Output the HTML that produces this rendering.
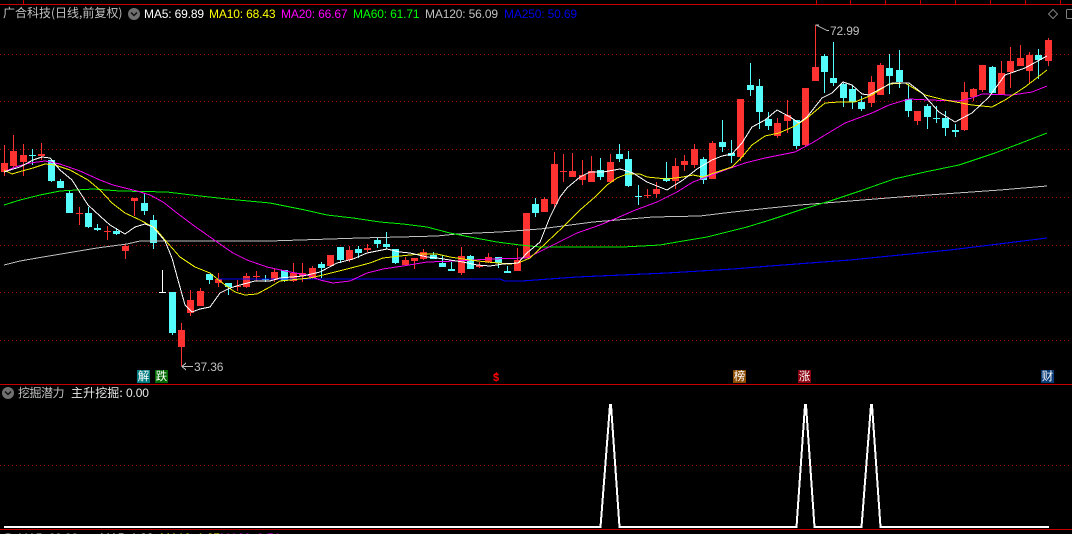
<!DOCTYPE html>
<html><head><meta charset="utf-8">
<style>
html,body{margin:0;padding:0;background:#000}
#p{position:relative;width:1072px;height:534px;overflow:hidden;background:#000;font-family:"Liberation Sans","Noto Sans CJK SC",sans-serif}
svg{position:absolute;left:0;top:0}
.t{position:absolute;white-space:nowrap;font-size:12px;line-height:14px;top:7px;letter-spacing:-.15px}
.c{font-family:"Noto Sans CJK SC","WenQuanYi Zen Hei",sans-serif;font-size:12px;color:#c0c0c0}
.m{position:absolute;top:370px;width:13px;height:13px;color:#fff;font:11.5px/13px "Noto Sans CJK SC",sans-serif;text-align:center}
</style></head><body><div id="p">
<svg width="1072" height="534" viewBox="0 0 1072 534">
<g shape-rendering="crispEdges" fill="none">
<path d="M0 4.5H1072M0 384.5H1072M0 529.5H1072" stroke="#c80000"/>
<path d="M23.5 0V4M816.5 0V4M850.5 0V4M885.5 0V4M920.5 0V4M955.5 0V4M990.5 0V4M1025.5 0V4M1060.5 0V4" stroke="#c80000"/>
<path d="M0 54.5H1072M0 101.5H1072M0 149.5H1072M0 197.5H1072M0 245.5H1072M0 292.5H1072M0 340.5H1072M0 465.5H1072" stroke="#a00000" stroke-dasharray="1 3"/>
<path stroke="#ff3232" d="M4.5 145V176M13.5 135V168M23.5 144V176M41.5 143V160M79.5 207V225M107.5 226V240M125.5 244V259M134.5 198V216M181.5 323V366M190.5 290V316M200.5 288V306M218.5 273V287M237.5 280V291M246.5 273V288M256.5 271V281M274.5 268V282M293.5 263V282M302.5 263V282M312.5 266V279M330.5 255V266M349.5 246V262M367.5 244V252M405.5 257V266M414.5 258V269M423.5 249V260M461.5 247V275M479.5 262V268M488.5 253V263M517.5 248V271M526.5 213V258M544.5 197V212M554.5 152V208M563.5 154V182M572.5 153V177M582.5 160V185M591.5 156V182M610.5 154V182M647.5 189V198M656.5 182V198M675.5 158V189M684.5 155V171M694.5 144V168M712.5 141V179M740.5 99V161M777.5 118V138M787.5 100V133M805.5 88V147M815.5 25V81M871.5 76V107M880.5 63V95M917.5 111V125M964.5 82V131M973.5 88V101M982.5 65V92M1001.5 61V95M1010.5 47V88M1020.5 45V66M1029.5 52V84M1048.5 38V66"/>
<path stroke="#54fcfc" d="M32.5 149V165M51.5 159V182M60.5 179V188M69.5 191V213M88.5 207V228M97.5 224V231M116.5 228V235M144.5 194V215M153.5 215V249M172.5 292V335M209.5 274V284M228.5 283V295M265.5 275V282M284.5 270V282M321.5 262V278M340.5 247V263M358.5 246V258M377.5 238V248M386.5 232V249M395.5 249V264M433.5 252V259M442.5 255V267M451.5 262V271M470.5 255V269M498.5 257V268M507.5 266V273M535.5 198V217M600.5 158V180M619.5 144V162M628.5 151V187M638.5 185V205M666.5 162V182M703.5 157V184M722.5 120V152M731.5 140V163M750.5 63V96M759.5 79V129M768.5 112V130M796.5 120V149M824.5 54V93M833.5 42V86M843.5 83V107M852.5 86V109M861.5 96V111M889.5 54V94M899.5 50V88M908.5 84V117M927.5 104V129M936.5 106V123M945.5 111V136M955.5 124V137M992.5 66V93M1038.5 49V79"/>
<path stroke="#ff3232" stroke-width="7" d="M4.5 163V172M13.5 151V166M23.5 155V162M41.5 154V156M79.5 213V214M107.5 231V232M125.5 246V251M134.5 198V201M181.5 330V347M190.5 300V313M200.5 291V306M218.5 279V283M237.5 286V287M246.5 276V287M256.5 276V277M274.5 272V280M293.5 273V281M302.5 273V276M312.5 268V278M330.5 255V266M349.5 250V260M367.5 248V250M405.5 260V265M414.5 258V261M423.5 252V259M461.5 256V273M479.5 265V267M488.5 257V262M517.5 260V271M526.5 213V258M544.5 199V212M554.5 164V204M563.5 171V172M572.5 171V177M582.5 175V180M591.5 171V182M610.5 162V182M647.5 195V196M656.5 189V194M675.5 166V181M684.5 161V165M694.5 149V165M712.5 143V179M740.5 99V157M777.5 123V136M787.5 115V121M805.5 88V145M815.5 67V81M871.5 82V103M880.5 65V95M917.5 111V121M964.5 92V130M973.5 89V97M982.5 65V90M1001.5 73V95M1010.5 61V72M1020.5 58V66M1029.5 55V71M1048.5 40V61"/>
<path stroke="#54fcfc" stroke-width="7" d="M32.5 155V156M51.5 160V181M60.5 181V188M69.5 193V213M88.5 213V227M97.5 228V230M116.5 231V234M144.5 203V211M153.5 220V243M172.5 292V333M209.5 274V280M228.5 283V287M265.5 279V280M284.5 270V281M321.5 264V268M340.5 247V260M358.5 249V253M377.5 240V244M386.5 244V247M395.5 249V263M433.5 255V259M442.5 263V267M451.5 269V271M470.5 256V269M498.5 257V263M507.5 271V273M535.5 204V213M600.5 170V177M619.5 154V159M628.5 159V186M638.5 196V197M666.5 178V181M703.5 159V180M722.5 142V147M731.5 153V156M750.5 85V90M759.5 86V112M768.5 119V126M796.5 120V146M824.5 56V72M833.5 78V83M843.5 84V98M852.5 89V102M861.5 102V109M889.5 68V76M899.5 70V82M908.5 99V111M927.5 106V117M936.5 118V119M945.5 118V128M955.5 130V132M992.5 67V93M1038.5 55V60"/>
<path stroke="#fff" d="M162.5 270V292M159 292.5H166"/>
<polyline stroke="#0000f0" stroke-width="1.1" points="218,279 500,279 505,281 522,281 549,279 577,277 633,274.5 667,273 700,271 733,269 770,266 850,260 950,250 1047,238"/>
<polyline stroke="#c0c0c0" stroke-width="1" points="4,265 20,261 43,257 67,253 97,248 127,244 140,241 270,241 360,238 400,237 437,236 457,234 477,233 500,232 540,229 593,222 653,217 700,216 733,212 770,208 800,205 900,197 1000,190 1047,186"/>
<polyline stroke="#00f000" stroke-width="1" points="4,205 20,200 40,195 60,191 93,189 120,191 167,192 200,196 227,199 270,203 305,210 327,215 353,218 380,222 403,224 427,227 450,233 470,237 497,242 520,245 540,247 567,247 623,247 660,245 683,241 707,237 727,232 747,227 770,220 800,210 830,201 860,191 894,179 925,172 959,165 995,153 1029,140 1047,133"/>
<polyline stroke="#f000f0" stroke-width="1" points="4,172 15,167 30,163 45,161 60,164 80,171 100,180 113,185 137,191 150,195 163,202 177,213 193,225 217,242 233,253 247,260 267,267 290,272 307,275 320,280 333,283 350,281 367,273 383,269 403,266 427,262 457,261 490,259 527,258 557,243 577,233 600,225 617,218 633,211 657,202 677,192 693,182 712,175 725,170 745,163 765,158 795,152 812,143 825,135 845,123 872,113 889,105 909,99 929,100 959,101 972,98 982,94 1012,95 1032,92 1047,86"/>
<polyline stroke="#f0f000" stroke-width="1" points="4,170 12,174 22,171 33,168 45,164 55,165 70,170 88,180 100,190 112,203 125,213 140,220 155,228 165,240 180,257 195,267 210,273 225,285 235,292 245,295 257,294 270,287 280,281 310,278 323,275 347,269 370,263 383,258 400,256 420,254 437,254 450,257 470,260 487,262 510,264 518,263 530,258 563,227 580,210 595,197 607,185 617,178 627,174 640,174 647,177 667,179 683,177 693,175 703,177 717,172 732,167 742,157 752,145 765,136 779,133 795,126 807,118 825,103 839,102 855,102 872,95 889,84 905,83 925,95 945,100 972,105 992,107 1005,100 1025,87 1047,70"/>
<polyline stroke="#fff" stroke-width="1" points="4,172 10,170 20,167 33,160 42,157 50,158 60,170 72,180 88,205 100,216 110,225 125,234 135,227 145,224 153,227 165,241 172,258 178,280 185,305 192,312 200,309 210,307 220,293 230,288 240,285 255,281 270,281 280,278 303,276 320,272 337,263 353,259 367,253 377,251 387,249 400,252 410,253 427,257 437,258 450,260 463,262 477,265 490,266 503,264 518,263 527,253 540,242 550,217 560,197 567,188 580,177 590,172 603,172 620,169 633,173 647,182 667,190 683,180 697,169 712,160 722,156 732,154 742,143 752,127 765,120 777,110 790,117 799,123 807,117 822,98 832,93 843,82 852,85 862,94 869,95 882,88 892,83 909,83 922,93 939,112 955,122 972,113 989,97 1005,75 1025,68 1047,56"/>
<path stroke="#c0c0c0" d="M815.5 25H819M816 25L827 30.5H829M181.5 366.5H185M182 366.5H193M182 366.5L186 363M182 366.5L186 370"/>
<path stroke="#fff" stroke-width="2" d="M4 527H600.5L610 405H611L619.5 527H796.5L805 405H806L814.5 527H861.5L871 405H872L880.5 527H1049"/>
</g>
<circle cx="134" cy="14" r="6" fill="#707070"/>
<path d="M131 12.5l3 3 3-3" stroke="#111" stroke-width="1.5" fill="none"/>
<circle cx="8" cy="393" r="6" fill="#707070"/>
<path d="M5 391.5l3 3 3-3" stroke="#111" stroke-width="1.5" fill="none"/>
<circle cx="8" cy="539" r="6" fill="#707070"/>
<path d="M1053 9.5l4.5 4.5-4.5 4.5-4.5-4.5z" stroke="#808080" fill="none"/>
<rect x="1066.5" y="9.5" width="9" height="9" rx="1" stroke="#808080" fill="none"/>
<path d="M496.5 372l2.5 3h-5z" fill="#f00"/>
</svg>
<div class="t c" style="left:3px;top:6px;letter-spacing:0">广合科技(日线,前复权)</div>
<div class="t" style="left:144px;color:#fff">MA5: 69.89</div>
<div class="t" style="left:209px;color:#ff0">MA10: 68.43</div>
<div class="t" style="left:281px;color:#f0f">MA20: 66.67</div>
<div class="t" style="left:353px;color:#0f0">MA60: 61.71</div>
<div class="t" style="left:425px;color:#c0c0c0">MA120: 56.09</div>
<div class="t" style="left:504px;color:#0000e6">MA250: 50.69</div>
<div class="t" style="left:830px;top:24px;color:#c0c0c0">72.99</div>
<div class="t" style="left:194px;top:360px;color:#c0c0c0">37.36</div>
<div class="m" style="left:137px;background:#007c80">解</div>
<div class="m" style="left:155px;background:#006a00">跌</div>
<div class="m" style="left:733px;background:#8a4a00">榜</div>
<div class="m" style="left:798px;background:#8a0010">涨</div>
<div class="m" style="left:1041px;background:#0a3c78">财</div>
<div class="t" style="left:493px;top:373px;color:#f00;font-weight:bold;font-size:11px;line-height:11px">$</div>
<div class="t c" style="left:18px;top:386px;letter-spacing:-.5px">挖掘潜力</div>
<div class="t c" style="left:71px;top:386px;color:#e8e8e8;letter-spacing:.1px">主升挖掘:</div>
<div class="t" style="left:126px;top:386px;color:#e8e8e8">0.00</div>
<div class="t" style="left:18px;top:531px;color:#c0c0c0">MA5: 68.32</div>
<div class="t" style="left:100px;top:531px;color:#fff">MA5: 1.33</div>
<div class="t" style="left:160px;top:531px;color:#ff0">MA10: 1.27</div>
<div class="t" style="left:220px;top:531px;color:#f0f">MA20: 0.74</div>
</div></body></html>
